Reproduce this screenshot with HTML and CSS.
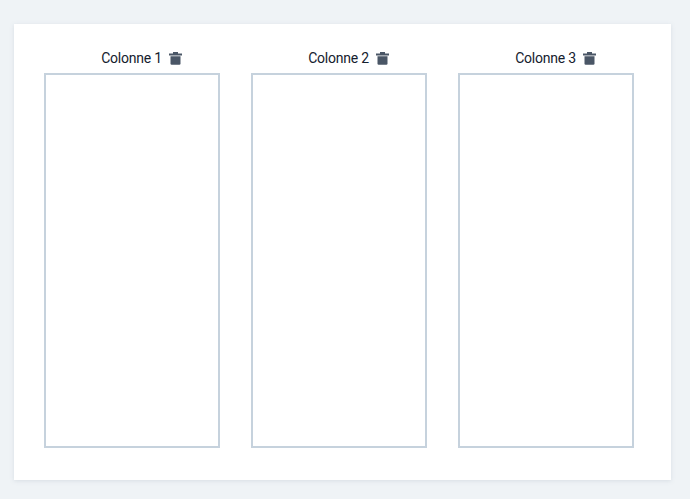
FILE: index.html
```html
<!DOCTYPE html>
<html lang="fr">
<head>
<meta charset="utf-8">
<title>Colonnes</title>
<link rel="stylesheet" href="styles.css">
</head>
<body>
<main class="card">
  <section class="column">
    <header class="column-head"><span class="label">Colonne 1</span>
      <svg class="trash" viewBox="0 0 13 13"><path d="M4 0h5v1.500h4v2H0v-2h4z"/><path d="M1.500 4.200h10v7.300a1.200 1.200 0 0 1-1.200 1.200H2.700a1.200 1.200 0 0 1-1.200-1.200z"/></svg>
    </header>
    <div class="drop"></div>
  </section>
  <section class="column">
    <header class="column-head"><span class="label">Colonne 2</span>
      <svg class="trash" viewBox="0 0 13 13"><path d="M4 0h5v1.500h4v2H0v-2h4z"/><path d="M1.500 4.200h10v7.300a1.200 1.200 0 0 1-1.200 1.200H2.700a1.200 1.200 0 0 1-1.200-1.200z"/></svg>
    </header>
    <div class="drop"></div>
  </section>
  <section class="column">
    <header class="column-head"><span class="label">Colonne 3</span>
      <svg class="trash" viewBox="0 0 13 13"><path d="M4 0h5v1.500h4v2H0v-2h4z"/><path d="M1.500 4.200h10v7.300a1.200 1.200 0 0 1-1.200 1.200H2.700a1.200 1.200 0 0 1-1.200-1.200z"/></svg>
    </header>
    <div class="drop"></div>
  </section>
</main>
</body>
</html>
```
FILE: styles.css
```css
html, body { height: 100%; }
body {
  margin: 0;
  padding: 24px 19px 19px 14px;
  box-sizing: border-box;
  background: #eff3f6;
  font-family: Roboto, "Liberation Sans", sans-serif;
  overflow: hidden;
}
.card {
  height: 456px;
  box-sizing: border-box;
  padding: 24px 37px 32px 30px;
  background: #fff;
  box-shadow: 0 1px 4px rgba(150, 165, 180, 0.25);
  display: flex;
  gap: 31px;
}
.column {
  flex: 1;
  display: flex;
  flex-direction: column;
}
.column-head {
  height: 25px;
  display: flex;
  align-items: center;
  justify-content: center;
  gap: 7px;
  padding-bottom: 5px;
  padding-left: 19px;
  box-sizing: border-box;
}
.label {
  font-size: 14px;
  letter-spacing: -0.22px;
  color: #14202e;
}
.trash {
  width: 13px;
  height: 13px;
  fill: #4a5666;
}
.drop {
  flex: 1;
  border: 2px solid #c6d2dd;
}
```
